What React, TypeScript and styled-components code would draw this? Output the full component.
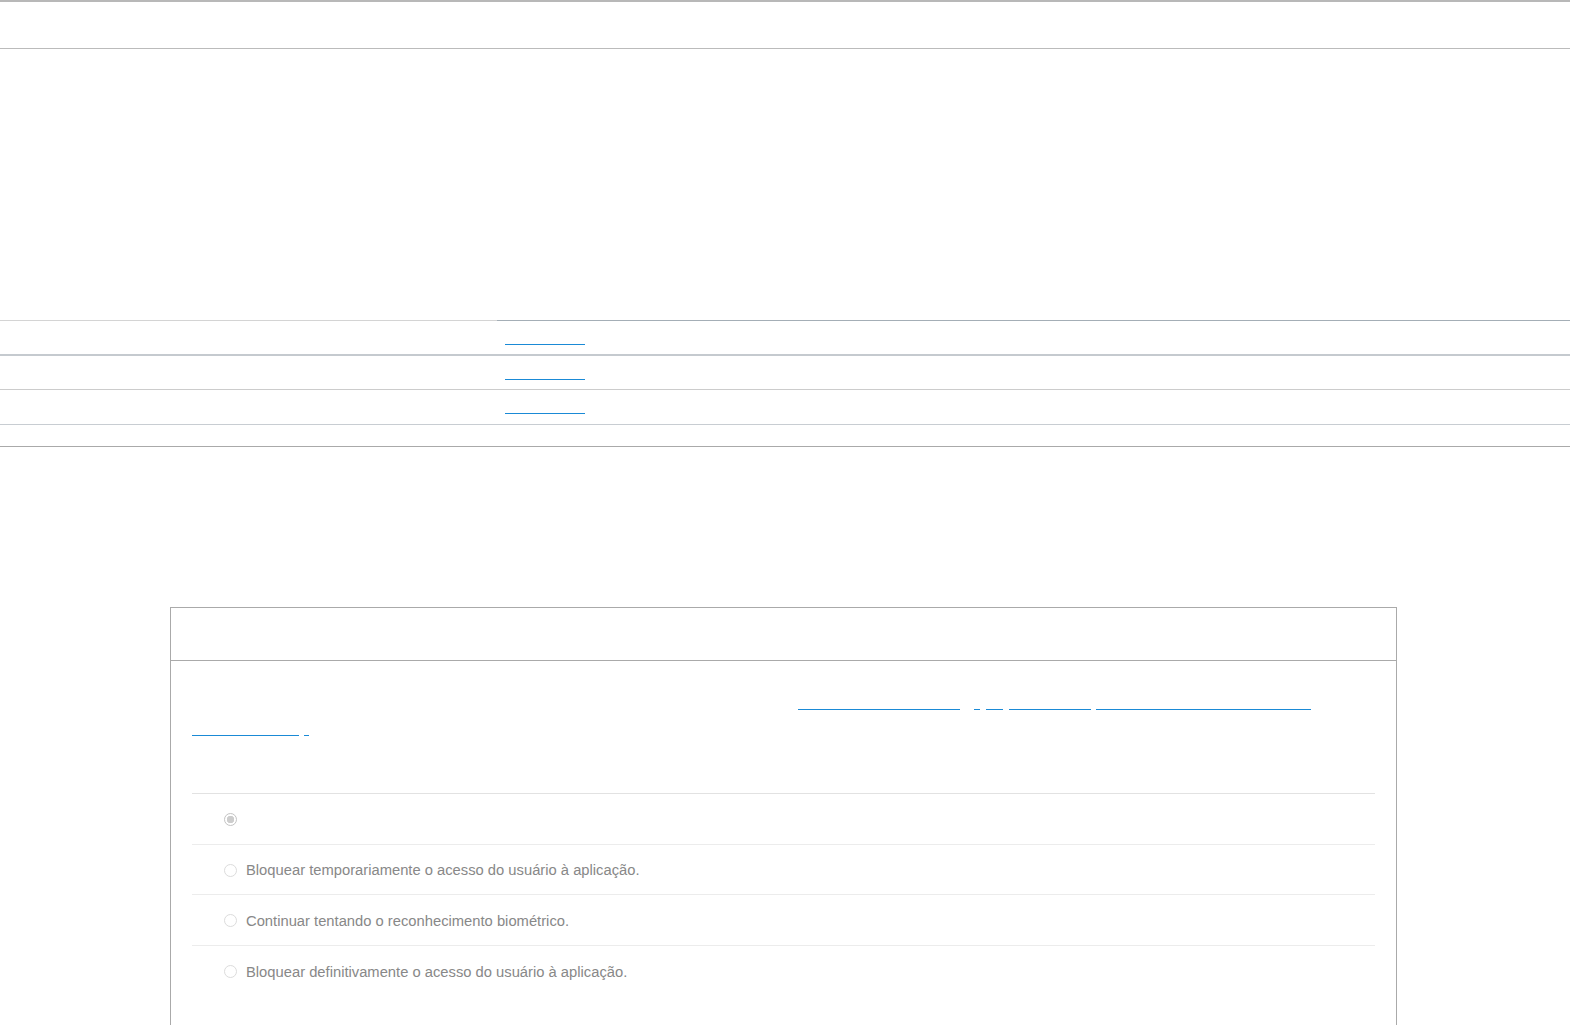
import React from "react";
import styled, { createGlobalStyle } from "styled-components";

const GlobalStyle = createGlobalStyle`
  *, *::before, *::after {
    box-sizing: border-box;
  }
  body {
    margin: 0;
    background: #fff;
    font-family: "Liberation Sans", Arial, sans-serif;
  }
`;

interface Segment {
  w: number;
  gap: number;
}

const tableRows = [
  { link: true, h: 35, line: "#c5cacf", lw: 2 },
  { link: true, h: 34, line: "#cccccc", lw: 1 },
  { link: true, h: 35, line: "#c8cdd2", lw: 1 },
  { link: false, h: 22, line: "#aaaaaa", lw: 1 },
];

const firstLine: Segment[] = [
  { w: 162, gap: 606 },
  { w: 6, gap: 14 },
  { w: 17, gap: 6 },
  { w: 82, gap: 6 },
  { w: 215, gap: 5 },
];

const secondLine: Segment[] = [
  { w: 107, gap: 0 },
  { w: 5, gap: 5 },
];

const options = [
  { label: "", checked: true },
  { label: "Bloquear temporariamente o acesso do usuário à aplicação.", checked: false },
  { label: "Continuar tentando o reconhecimento biométrico.", checked: false },
  { label: "Bloquear definitivamente o acesso do usuário à aplicação.", checked: false },
];

const App: React.FC = () => {
  return (
    <Page>
      <GlobalStyle />
      <TopBar />
      <Table>
        <HeadRow>
          <HeadCell $w={497} $color="#d4d4d4" />
          <HeadCell $color="#a4aeb6" />
        </HeadRow>
        {tableRows.map((row, i) => (
          <Row key={i} $h={row.h} $line={row.line} $lw={row.lw}>
            <Cell $w={497} />
            <LinkCell>{row.link && <TableLink href="#" aria-label="link" />}</LinkCell>
          </Row>
        ))}
      </Table>

      <Card>
        <CardHeader />
        <CardBody>
          <Paragraph>
            <TextLine>
              {firstLine.map((s, i) => (
                <Underline key={i} $w={s.w} $gap={s.gap} />
              ))}
            </TextLine>
            <TextLine>
              {secondLine.map((s, i) => (
                <Underline key={i} $w={s.w} $gap={s.gap} />
              ))}
            </TextLine>
          </Paragraph>
          <OptionList>
            {options.map((o, i) => (
              <Option key={i}>
                <Radio $checked={o.checked} />
                <OptionLabel>{o.label}</OptionLabel>
              </Option>
            ))}
          </OptionList>
        </CardBody>
      </Card>
    </Page>
  );
};

const Page = styled.div`
  width: 1570px;
  min-height: 1025px;
  overflow: hidden;
`;

const TopBar = styled.div`
  height: 49px;
  border-top: 2px solid #b8b8b8;
  border-bottom: 1px solid #bbbbbb;
`;

const Table = styled.div`
  margin-top: 271px;
  display: flex;
  flex-direction: column;
`;

const HeadRow = styled.div`
  display: flex;
`;

const HeadCell = styled.div<{ $w?: number; $color: string }>`
  flex: ${(p) => (p.$w ? `0 0 ${p.$w}px` : "1")};
  border-top: 1px solid ${(p) => p.$color};
`;

const Row = styled.div<{ $h: number; $line: string; $lw: number }>`
  display: flex;
  height: ${(p) => p.$h}px;
  border-bottom: ${(p) => p.$lw}px solid ${(p) => p.$line};
`;

const Cell = styled.div<{ $w?: number }>`
  flex: ${(p) => (p.$w ? `0 0 ${p.$w}px` : "1")};
`;

const LinkCell = styled(Cell)`
  padding-left: 8px;
`;

const TableLink = styled.a`
  display: block;
  width: 80px;
  height: 24px;
  border-bottom: 1px solid #1a8ad6;
`;

const Card = styled.div`
  margin: 160px 0 0 170px;
  width: 1227px;
  border: 1px solid #aaaaaa;
  border-bottom: none;
  min-height: 420px;
`;

const CardHeader = styled.div`
  height: 53px;
  border-bottom: 1px solid #aaaaaa;
`;

const CardBody = styled.div`
  padding: 30px 21px 0 21px;
`;

const Paragraph = styled.div`
  font-size: 15px;
  line-height: 26px;
  color: #666;
`;

const TextLine = styled.div`
  display: flex;
  height: 26px;
`;

const Underline = styled.a<{ $w: number; $gap: number }>`
  display: block;
  width: ${(p) => p.$w}px;
  margin-left: ${(p) => p.$gap}px;
  height: 19px;
  border-bottom: 1px solid #1a8ad6;
`;

const OptionList = styled.div`
  margin-top: 50px;
  border-top: 1px solid #e2e2e2;
`;

const Option = styled.label`
  display: flex;
  align-items: center;
  height: 50.5px;
  padding: 2px 0 0 32px;
  border-bottom: 1px solid #ececec;
  &:last-child {
    border-bottom: none;
  }
`;

const Radio = styled.span<{ $checked: boolean }>`
  width: 13px;
  height: 13px;
  border-radius: 50%;
  border: 1px solid ${(p) => (p.$checked ? "#c4c4c4" : "#dcdcdc")};
  background: ${(p) =>
    p.$checked ? "radial-gradient(circle, #cdcdcd 0 3.5px, #fff 4px)" : "#fff"};
  flex: 0 0 13px;
`;

const OptionLabel = styled.span`
  margin-left: 9px;
  font-size: 14.75px;
  color: #888888;
`;

export default App;
